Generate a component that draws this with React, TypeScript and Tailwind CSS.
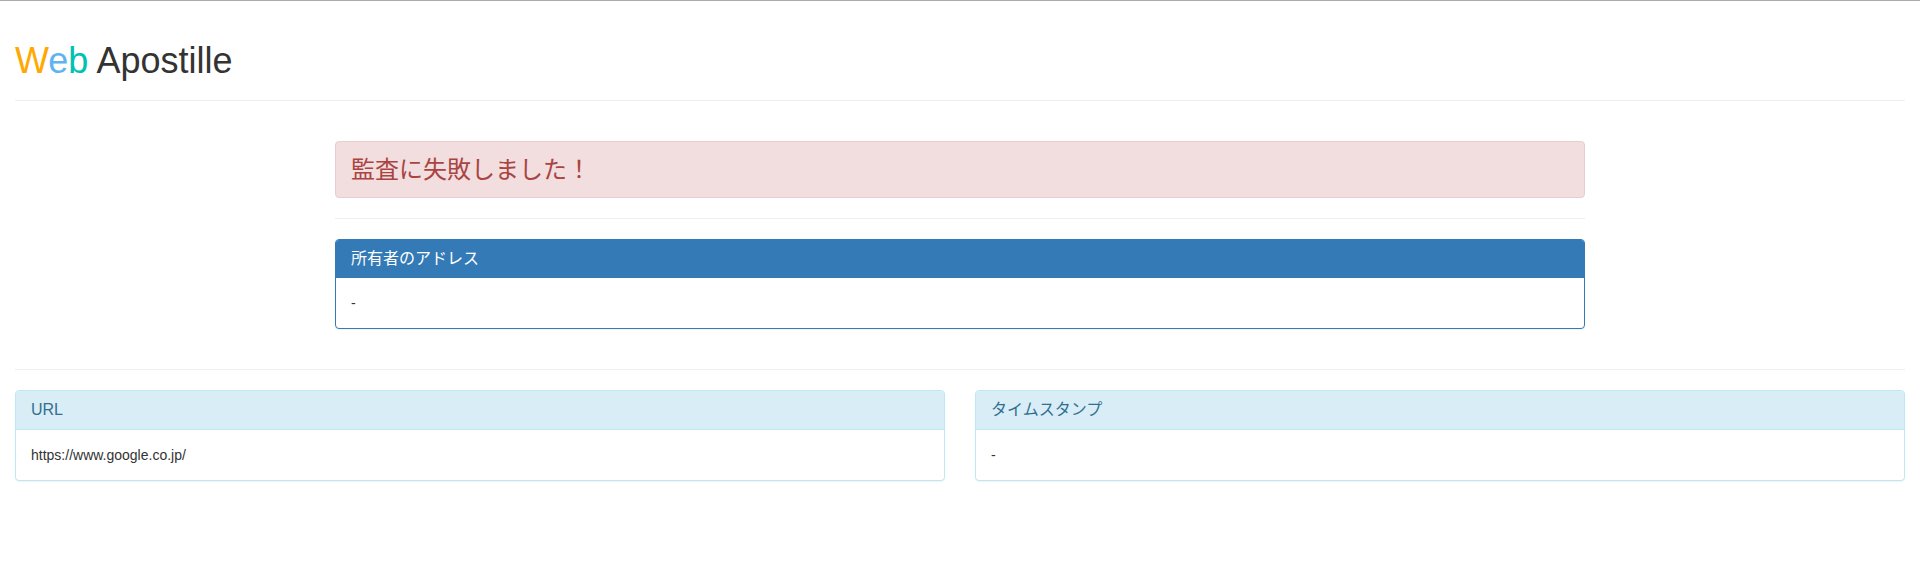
const font = "font-['Liberation_Sans','Noto_Sans_CJK_JP',sans-serif]";

const Panel = ({ title, body, variant }: { title: string; body: string; variant: "primary" | "info" }) => {
  const primary = variant === "primary";
  return (
    <div
      className={
        primary
          ? "rounded-[4px] border border-[#337ab7] bg-white shadow-[0_1px_1px_rgba(0,0,0,0.05)]"
          : "rounded-[4px] border border-[#bce8f1] bg-white shadow-[0_1px_1px_rgba(0,0,0,0.05)]"
      }
    >
      <div
        className={
          primary
            ? "rounded-t-[3px] border-b border-[#337ab7] bg-[#337ab7] px-[15px] py-[10px] text-white"
            : "rounded-t-[3px] border-b border-[#bce8f1] bg-[#d9edf7] px-[15px] py-[10px] text-[#31708f]"
        }
      >
        <h3 className="text-[16px] leading-[17.6px]">{title}</h3>
      </div>
      <div className="p-[15px] text-[14px] leading-[20px] text-[#333]">{body}</div>
    </div>
  );
};

export default function App() {
  return (
    <div className={`${font} min-h-[584px] border-t border-[#ababab] bg-white px-[15px] text-[#333]`}>
      <div className="mt-[40px] mb-[20px] border-b border-[#eee] pb-[9px]">
        <h1 className="mb-[10px] text-[36px] leading-[39.6px] font-normal">
          <span className="text-[#ffa800]">W</span>
          <span className="text-[#5fb3ef]">e</span>
          <span className="text-[#00c2b2]">b</span> Apostille
        </h1>
      </div>

      <div className="mx-auto w-[1250px] pt-[20px]">
        <div className="rounded-[4px] border border-[#ebccd1] bg-[#f2dede] px-[15px] py-[15px] text-[#a94442]">
          <h3 className="text-[24px] leading-[25px] font-normal">監査に失敗しました！</h3>
        </div>
        <hr className="my-[20px] border-t border-[#eee]" />
        <Panel variant="primary" title="所有者のアドレス" body="-" />
      </div>

      <hr className="mt-[40px] mb-[20px] border-t border-[#eee]" />

      <div className="grid grid-cols-2 gap-[30px]">
        <Panel variant="info" title="URL" body="https://www.google.co.jp/" />
        <Panel variant="info" title="タイムスタンプ" body="-" />
      </div>
    </div>
  );
}
